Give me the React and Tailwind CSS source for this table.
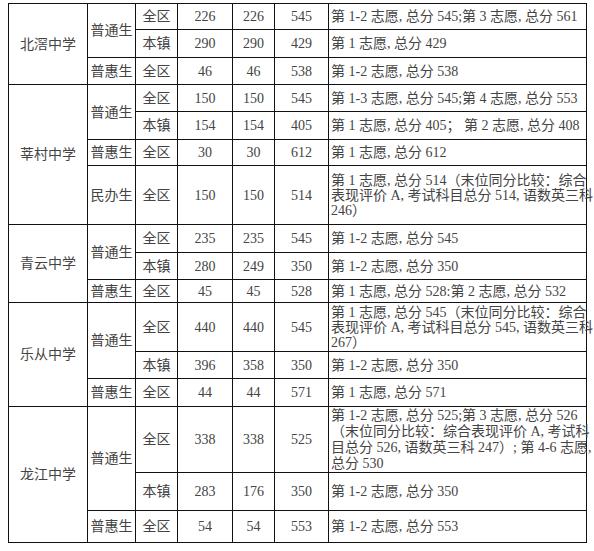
import React from 'react';

const line = 'border-r border-b border-[#111]';
const mid = `flex items-center justify-center ${line}`;
const note = `flex flex-col justify-center pl-[2px] whitespace-nowrap ${line}`;

const schools = [
  {
    name: '北滘中学', span: 'row-span-3',
    rows: [
      { kind: '普通生', kindSpan: 'row-span-2', area: '全区', a: '226', b: '226', c: '545', text: ['第 1-2 志愿, 总分 545;第 3 志愿, 总分 561'] },
      { area: '本镇', a: '290', b: '290', c: '429', text: ['第 1 志愿, 总分 429'] },
      { kind: '普惠生', area: '全区', a: '46', b: '46', c: '538', text: ['第 1-2 志愿, 总分 538'] },
    ],
  },
  {
    name: '莘村中学', span: 'row-span-4',
    rows: [
      { kind: '普通生', kindSpan: 'row-span-2', area: '全区', a: '150', b: '150', c: '545', text: ['第 1-3 志愿, 总分 545;第 4 志愿, 总分 553'] },
      { area: '本镇', a: '154', b: '154', c: '405', text: ['第 1 志愿, 总分 405； 第 2 志愿, 总分 408'] },
      { kind: '普惠生', area: '全区', a: '30', b: '30', c: '612', text: ['第 1 志愿, 总分 612'] },
      { kind: '民办生', area: '全区', a: '150', b: '150', c: '514', lead: 'leading-[15px]', text: ['第 1 志愿, 总分 514（末位同分比较：综合', '表现评价 A, 考试科目总分 514, 语数英三科', '246）'] },
    ],
  },
  {
    name: '青云中学', span: 'row-span-3',
    rows: [
      { kind: '普通生', kindSpan: 'row-span-2', area: '全区', a: '235', b: '235', c: '545', text: ['第 1-2 志愿, 总分 545'] },
      { area: '本镇', a: '280', b: '249', c: '350', text: ['第 1-2 志愿, 总分 350'] },
      { kind: '普惠生', area: '全区', a: '45', b: '45', c: '528', text: ['第 1 志愿, 总分 528:第 2 志愿, 总分 532'] },
    ],
  },
  {
    name: '乐从中学', span: 'row-span-3',
    rows: [
      { kind: '普通生', kindSpan: 'row-span-2', area: '全区', a: '440', b: '440', c: '545', lead: 'leading-[15px]', text: ['第 1 志愿, 总分 545（末位同分比较：综合', '表现评价 A, 考试科目总分 545, 语数英三科', '267）'] },
      { area: '本镇', a: '396', b: '358', c: '350', text: ['第 1-2 志愿, 总分 350'] },
      { kind: '普惠生', area: '全区', a: '44', b: '44', c: '571', text: ['第 1 志愿, 总分 571'] },
    ],
  },
  {
    name: '龙江中学', span: 'row-span-3',
    rows: [
      { kind: '普通生', kindSpan: 'row-span-2', area: '全区', a: '338', b: '338', c: '525', lead: 'leading-[16px]', text: ['第 1-2 志愿, 总分 525;第 3 志愿, 总分 526', '（末位同分比较：综合表现评价 A, 考试科', '目总分 526, 语数英三科 247）; 第 4-6 志愿,', '总分 530'] },
      { area: '本镇', a: '283', b: '176', c: '350', text: ['第 1-2 志愿, 总分 350'] },
      { kind: '普惠生', area: '全区', a: '54', b: '54', c: '553', text: ['第 1-2 志愿, 总分 553'] },
    ],
  },
];

export default function App() {
  return (
    <div className="min-h-[551px] w-[594px] bg-white pt-[3px] pl-2 text-[14px] text-[#444] font-['Liberation_Serif','Noto_Sans_CJK_SC',serif]">
      <div className="grid w-[579px] grid-cols-[79px_48px_42px_55px_42px_54px_258px] grid-rows-[26px_28px_27px_27px_28px_26px_59px_28px_27px_23px_49px_27px_28px_66px_38px_32px] border-t border-l border-[#111]">
        {schools.map(school => (
          <React.Fragment key={school.name}>
            <div className={`${school.span} ${mid}`}>{school.name}</div>
            {school.rows.map((r, i) => (
              <React.Fragment key={i}>
                {r.kind && <div className={`${r.kindSpan || ''} ${mid}`}>{r.kind}</div>}
                <div className={mid}>{r.area}</div>
                <div className={mid}>{r.a}</div>
                <div className={mid}>{r.b}</div>
                <div className={mid}>{r.c}</div>
                <div className={`${note} ${r.lead || ''}`}>
                  {r.text.map((t, j) => <span key={j}>{t}</span>)}
                </div>
              </React.Fragment>
            ))}
          </React.Fragment>
        ))}
      </div>
    </div>
  );
}
